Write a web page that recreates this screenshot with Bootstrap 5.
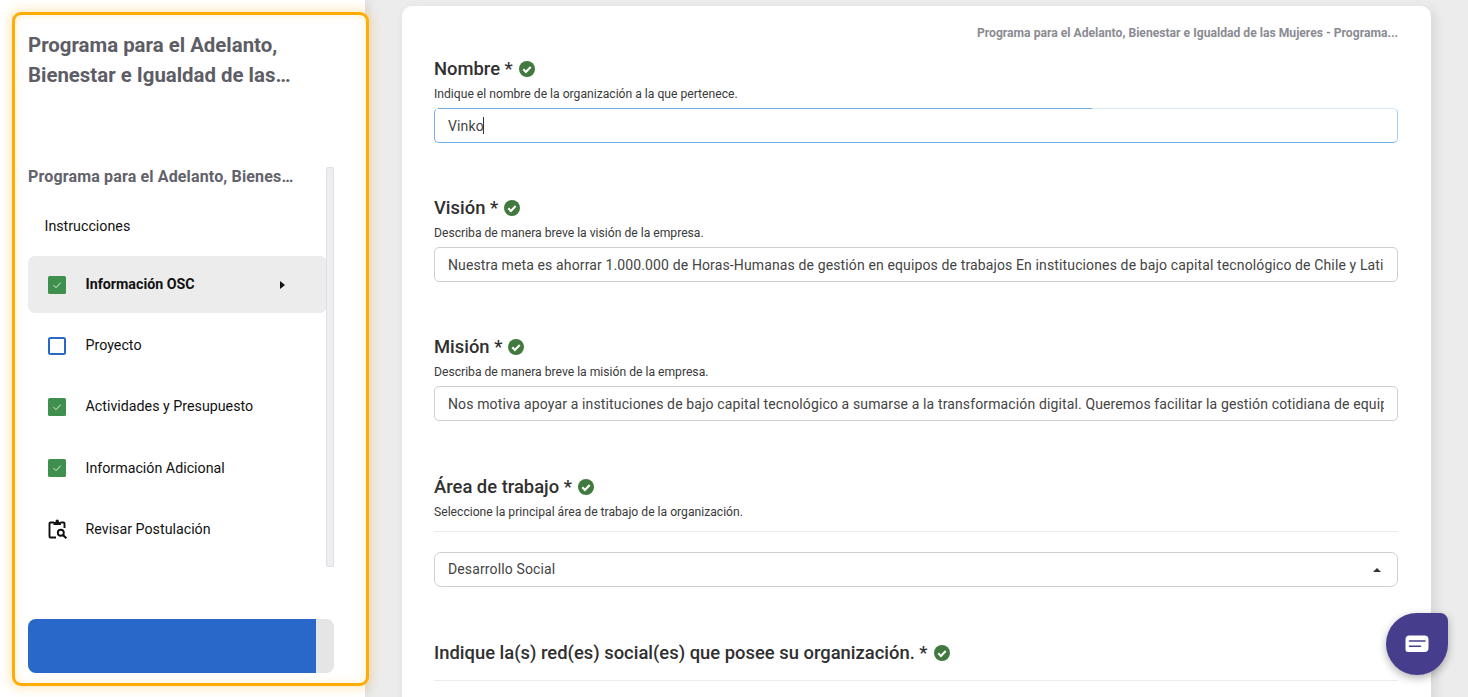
<!DOCTYPE html>
<html lang="es">
<head>
<meta charset="utf-8">
<title>Postulación</title>
<link rel="stylesheet" href="https://cdn.jsdelivr.net/npm/bootstrap@5.3.0/dist/css/bootstrap.min.css">
<style>
html,body{height:697px;overflow:hidden}
body{font-family:Roboto,"Liberation Sans",sans-serif;background:#ececec;color:#2f2f2f}
.app-shell{height:697px}
.side-pane{width:365px;height:697px;background:#fff;flex:none;box-shadow:3px 0 10px rgba(0,0,0,.08);position:relative;z-index:2}
.side-frame{height:674px;margin:12px -4px 0 12px;width:357px;border:3px solid #ffad05;border-radius:9px;background:#fff;padding:0 31px 10px 13px;box-shadow:0 0 10px 3px rgba(255,190,60,.3),inset 0 0 8px rgba(255,190,60,.25)}
.side-title{font-size:20.4px;line-height:30px;font-weight:700;color:#5d5d66;margin:15px 0 0;height:60px;width:285px}
.side-scroll{margin-top:77px;height:400px;position:relative;width:307px}
.side-sub{font-size:16px;font-weight:700;color:#62626b;line-height:20px;white-space:nowrap;letter-spacing:.15px}
.scroll-rail{position:absolute;left:298px;top:0;width:8px;height:400px;background:#eeeef1;border:1px solid #e0e0e4;border-radius:2px}
.step-list{width:299px;margin-top:11px}
.step-row{height:57px;margin-bottom:4.3px;font-size:14.25px;color:#111;padding-left:20px;gap:19.5px;border-radius:7px}
.step-plain{padding-left:16.500px;height:59px;margin-bottom:0;margin-top:-1px}
.step-active{background:#ececec;font-weight:700}
.step-box{width:18px;height:18px;flex:none;display:block}
.clip-box{width:20px;height:21px;margin-right:-2px}
.step-caret{margin-left:auto;margin-right:42px;width:0;height:0;border-left:5px solid #111;border-top:4px solid transparent;border-bottom:4px solid transparent}
.progress-shell{height:54px;width:306px;margin-top:54px;background:#e5e5e5;border-radius:8px;overflow:hidden}
.progress-fill{height:54px;width:288px;background:#2968c8}
.main-pane{flex:1;padding:6px 37px 0 37px;min-width:0}
.form-sheet{width:1029px;height:720px;background:#fff;border-radius:10px;padding:0 33px 0 32px;box-shadow:4px 4px 12px rgba(0,0,0,.1)}
.crumb{font-size:12.15px;font-weight:700;color:#8b8b93;text-align:right;line-height:14px;padding-top:20px;height:34px}
.field-head{font-size:18.4px;font-weight:500;line-height:24px;color:#303030;margin:0;gap:6px}
.ok-mark{width:16px;height:16px;flex:none;display:block}
.field-help{font-size:12.15px;line-height:14px;color:#3a3a3a;margin:6px 0 7px}
.text-box.form-control{height:35px;font-size:14px;line-height:20px;padding:0 13px;border:1px solid #cfcfcf;border-radius:5px;color:#444;letter-spacing:.13px;box-shadow:none}
.focus-wrap{position:relative}
.focus-wrap .text-box.form-control{border-color:#d8e9f8 #a9cdf0 #72aee8 #72aee8}
.focus-edge{position:absolute;left:4px;top:0;width:654px;height:1px;background:#72aee8}
.type-caret{position:absolute;left:49px;top:9px;width:1px;height:17px;background:#333}
.block-gap{margin-bottom:53px}
.block-gap-wide{margin-bottom:54px}
.first-block{margin-top:17px}
.rule-line{height:1px;background:#ececec;margin:12px 0 20px}
.rule-social{margin-top:15px}
.pick-box{height:35px;border:1px solid #cfcfcf;border-radius:7px;padding:0 16px 0 13px;font-size:14px;color:#444;letter-spacing:.13px}
.pick-caret{width:0;height:0;border-left:4px solid transparent;border-right:4px solid transparent;border-bottom:4px solid #333}
.chat-bubble{position:absolute;left:1386px;top:613px;width:62px;height:62px;background:#463e8c;border-radius:50% 8px 50% 50%;box-shadow:0 3px 8px rgba(0,0,0,.3);z-index:5}
.social-head{margin-top:54px}
</style>
</head>
<body>
<div class="app-shell d-flex">
  <aside class="side-pane">
    <div class="side-frame d-flex flex-column">
      <h1 class="side-title">Programa para el Adelanto, Bienestar e Igualdad de las…</h1>
      <div class="side-scroll">
        <div class="side-sub">Programa para el Adelanto, Bienes…</div>
        <div class="scroll-rail"></div>
        <div class="step-list">
          <div class="d-flex align-items-center step-row step-plain">Instrucciones</div>
          <div class="d-flex align-items-center step-row step-active">
            <svg class="step-box" viewBox="0 0 18 18"><rect width="18" height="18" rx="1.5" fill="#3f8f4f"/><path d="M5.5 9.2l2.5 2.5 4.6-5" fill="none" stroke="#dff0e2" stroke-width="1"/></svg>
            <span>Información OSC</span><span class="step-caret"></span>
          </div>
          <div class="d-flex align-items-center step-row">
            <svg class="step-box" viewBox="0 0 18 18"><rect x="1" y="1" width="16" height="16" rx="1.5" fill="#fff" stroke="#2968c8" stroke-width="2"/></svg>
            <span>Proyecto</span>
          </div>
          <div class="d-flex align-items-center step-row">
            <svg class="step-box" viewBox="0 0 18 18"><rect width="18" height="18" rx="1.5" fill="#3f8f4f"/><path d="M5.5 9.2l2.5 2.5 4.6-5" fill="none" stroke="#dff0e2" stroke-width="1"/></svg>
            <span>Actividades y Presupuesto</span>
          </div>
          <div class="d-flex align-items-center step-row">
            <svg class="step-box" viewBox="0 0 18 18"><rect width="18" height="18" rx="1.5" fill="#3f8f4f"/><path d="M5.5 9.2l2.5 2.5 4.6-5" fill="none" stroke="#dff0e2" stroke-width="1"/></svg>
            <span>Información Adicional</span>
          </div>
          <div class="d-flex align-items-center step-row">
            <svg class="step-box clip-box" viewBox="0 0 20 21"><path d="M6 3.500H2.500a1 1 0 0 0-1 1v13a1 1 0 0 0 1 1H8M12.500 3.500h3a1 1 0 0 1 1 1V9" fill="none" stroke="#111" stroke-width="1.900"/><path d="M5.500 3h2v-.8a1.700 1.700 0 0 1 3.400 0V3h2v3h-7.400z" fill="#111"/><circle cx="12.800" cy="13.800" r="3" fill="none" stroke="#111" stroke-width="1.900"/><path d="M15 16l3.300 3.300" stroke="#111" stroke-width="2.100"/></svg>
            <span>Revisar Postulación</span>
          </div>
        </div>
      </div>
      <div class="progress-shell"><div class="progress-fill"></div></div>
    </div>
  </aside>
  <main class="main-pane">
    <div class="form-sheet">
      <div class="crumb">Programa para el Adelanto, Bienestar e Igualdad de las Mujeres - Programa...</div>
      <div class="first-block block-gap">
        <h2 class="field-head d-flex align-items-center">Nombre * <svg class="ok-mark" viewBox="0 0 16 16"><circle cx="8" cy="8" r="8" fill="#41793f"/><path d="M4.300 8.300l2.600 2.600 4.800-5" fill="none" stroke="#fff" stroke-width="2.100"/></svg></h2>
        <p class="field-help">Indique el nombre de la organización a la que pertenece.</p>
        <div class="focus-wrap">
          <input class="form-control text-box" type="text" value="Vinko" aria-label="Nombre">
          <span class="focus-edge"></span><span class="type-caret"></span>
        </div>
      </div>
      <div class="block-gap">
        <h2 class="field-head d-flex align-items-center">Visión * <svg class="ok-mark" viewBox="0 0 16 16"><circle cx="8" cy="8" r="8" fill="#41793f"/><path d="M4.300 8.300l2.600 2.600 4.800-5" fill="none" stroke="#fff" stroke-width="2.100"/></svg></h2>
        <p class="field-help">Describa de manera breve la visión de la empresa.</p>
        <input class="form-control text-box" type="text" value="Nuestra meta es ahorrar 1.000.000 de Horas-Humanas de gestión en equipos de trabajos En instituciones de bajo capital tecnológico de Chile y Latinoamérica" aria-label="Visión">
      </div>
      <div class="block-gap-wide">
        <h2 class="field-head d-flex align-items-center">Misión * <svg class="ok-mark" viewBox="0 0 16 16"><circle cx="8" cy="8" r="8" fill="#41793f"/><path d="M4.300 8.300l2.600 2.600 4.800-5" fill="none" stroke="#fff" stroke-width="2.100"/></svg></h2>
        <p class="field-help">Describa de manera breve la misión de la empresa.</p>
        <input class="form-control text-box" type="text" value="Nos motiva apoyar a instituciones de bajo capital tecnológico a sumarse a la transformación digital. Queremos facilitar la gestión cotidiana de equipos" aria-label="Misión">
      </div>
      <div>
        <h2 class="field-head d-flex align-items-center">Área de trabajo * <svg class="ok-mark" viewBox="0 0 16 16"><circle cx="8" cy="8" r="8" fill="#41793f"/><path d="M4.300 8.300l2.600 2.600 4.800-5" fill="none" stroke="#fff" stroke-width="2.100"/></svg></h2>
        <p class="field-help mb-0">Seleccione la principal área de trabajo de la organización.</p>
        <div class="rule-line"></div>
        <div class="pick-box d-flex align-items-center justify-content-between"><span>Desarrollo Social</span><span class="pick-caret"></span></div>
      </div>
      <h2 class="field-head d-flex align-items-center social-head">Indique la(s) red(es) social(es) que posee su organización. * <svg class="ok-mark" viewBox="0 0 16 16"><circle cx="8" cy="8" r="8" fill="#41793f"/><path d="M4.300 8.300l2.600 2.600 4.800-5" fill="none" stroke="#fff" stroke-width="2.100"/></svg></h2>
      <div class="rule-line rule-social"></div>
    </div>
  </main>
</div>
<div class="chat-bubble d-flex align-items-center justify-content-center">
  <svg width="24" height="18" viewBox="0 0 24 18"><path d="M4.500.5h15a4 4 0 0 1 4 4v8.500a4 4 0 0 1-4 4H3A2.500 2.500 0 0 1 .5 14.500V4.500a4 4 0 0 1 4-4z" fill="#fff"/><path d="M4.500 6h15.500M4.500 11.300h11" stroke="#463e8c" stroke-width="1.600" stroke-linecap="round"/></svg>
</div>
<script src="https://cdn.jsdelivr.net/npm/bootstrap@5.3.0/dist/js/bootstrap.bundle.min.js"></script>
</body>
</html>
